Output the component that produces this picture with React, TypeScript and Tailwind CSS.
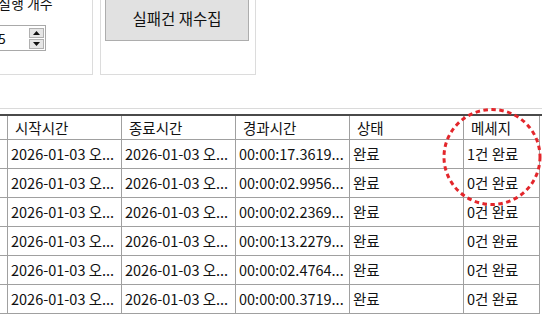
const rows = [
  { start: '2026-01-03 오...', end: '2026-01-03 오...', elapsed: '00:00:17.3619...', status: '완료', msg: '1건 완료' },
  { start: '2026-01-03 오...', end: '2026-01-03 오...', elapsed: '00:00:02.9956...', status: '완료', msg: '0건 완료' },
  { start: '2026-01-03 오...', end: '2026-01-03 오...', elapsed: '00:00:02.2369...', status: '완료', msg: '0건 완료' },
  { start: '2026-01-03 오...', end: '2026-01-03 오...', elapsed: '00:00:13.2279...', status: '완료', msg: '0건 완료' },
  { start: '2026-01-03 오...', end: '2026-01-03 오...', elapsed: '00:00:02.4764...', status: '완료', msg: '0건 완료' },
  { start: '2026-01-03 오...', end: '2026-01-03 오...', elapsed: '00:00:00.3719...', status: '완료', msg: '0건 완료' },
];

const headers = ['시작시간', '종료시간', '경과시간', '상태', '메세지'];
const grid = 'grid grid-cols-[8px_114px_114px_114px_114px_76px]';

export default function App() {
  return (
    <div className="relative h-[316px] w-[542px] overflow-hidden bg-white text-[14.5px] text-[#111] [font-family:'Noto_Sans_CJK_KR',sans-serif]">
      {/* top controls */}
      <div className="flex h-[108px] items-start gap-[7px] overflow-hidden">
        <div className="ml-[-40px] mt-[-20px] h-[95px] w-[133px] shrink-0 border border-[#dcdcdc] pl-[37px]">
          <div className="mt-[14px] text-[14px] leading-[16px]">실행 개수</div>
          <div className="ml-[-2px] mt-[14px] flex h-[26px] w-[50px] items-center justify-between border border-[#a9a9a9] pl-[1px] pr-[1px]">
            <span className="text-[14px] leading-none">5</span>
            <div className="flex flex-col gap-px">
              <div className="flex h-[10px] w-[15px] items-center justify-center border border-[#b0b0b0] bg-[#e6e6e6]">
                <svg width="7" height="4" viewBox="0 0 7 4"><path d="M0 4 L3.5 0 L7 4 Z" fill="#111" /></svg>
              </div>
              <div className="flex h-[10px] w-[15px] items-center justify-center border border-[#b0b0b0] bg-[#e6e6e6]">
                <svg width="7" height="4" viewBox="0 0 7 4"><path d="M0 0 L3.5 4 L7 0 Z" fill="#111" /></svg>
              </div>
            </div>
          </div>
        </div>
        <div className="mt-[-20px] h-[95px] w-[156px] shrink-0 border border-[#dcdcdc] pl-[4px] pt-[16px]">
          <button className="flex h-[44px] w-[144px] items-center justify-center border border-[#adadad] bg-[#e1e1e1] text-[15.5px] text-[#111]">
            실패건 재수집
          </button>
        </div>
      </div>
      <div className="h-px w-full bg-[#dadada]" />

      {/* grid */}
      <div className="mt-[5px] border-t-2 border-[#4a4a4a]">
        <div className={grid}>
          <div className="h-[24px] border-r border-b border-[#a0a0a0]" />
          {headers.map(h => (
            <div key={h} className="flex h-[24px] items-center border-r border-b border-[#a0a0a0] pl-[7px]">{h}</div>
          ))}
        </div>
        {rows.map((r, i) => (
          <div key={i} className={grid}>
            <div className="h-[29px] border-r border-b border-[#a0a0a0]" />
            {[r.start, r.end, r.elapsed, r.status, r.msg].map((c, j) => (
              <div key={j} className="flex h-[29px] items-center overflow-hidden whitespace-nowrap border-r border-b border-[#a0a0a0] pl-[3px]">{c}</div>
            ))}
          </div>
        ))}
      </div>

      {/* annotation */}
      <svg className="pointer-events-none absolute left-[441px] top-[107px]" width="102" height="100" viewBox="0 0 102 100">
        <ellipse cx="51" cy="50" rx="48" ry="47.5" fill="none" stroke="#e3262b" strokeWidth="3" strokeDasharray="4.5 3.5" />
      </svg>
    </div>
  );
}
